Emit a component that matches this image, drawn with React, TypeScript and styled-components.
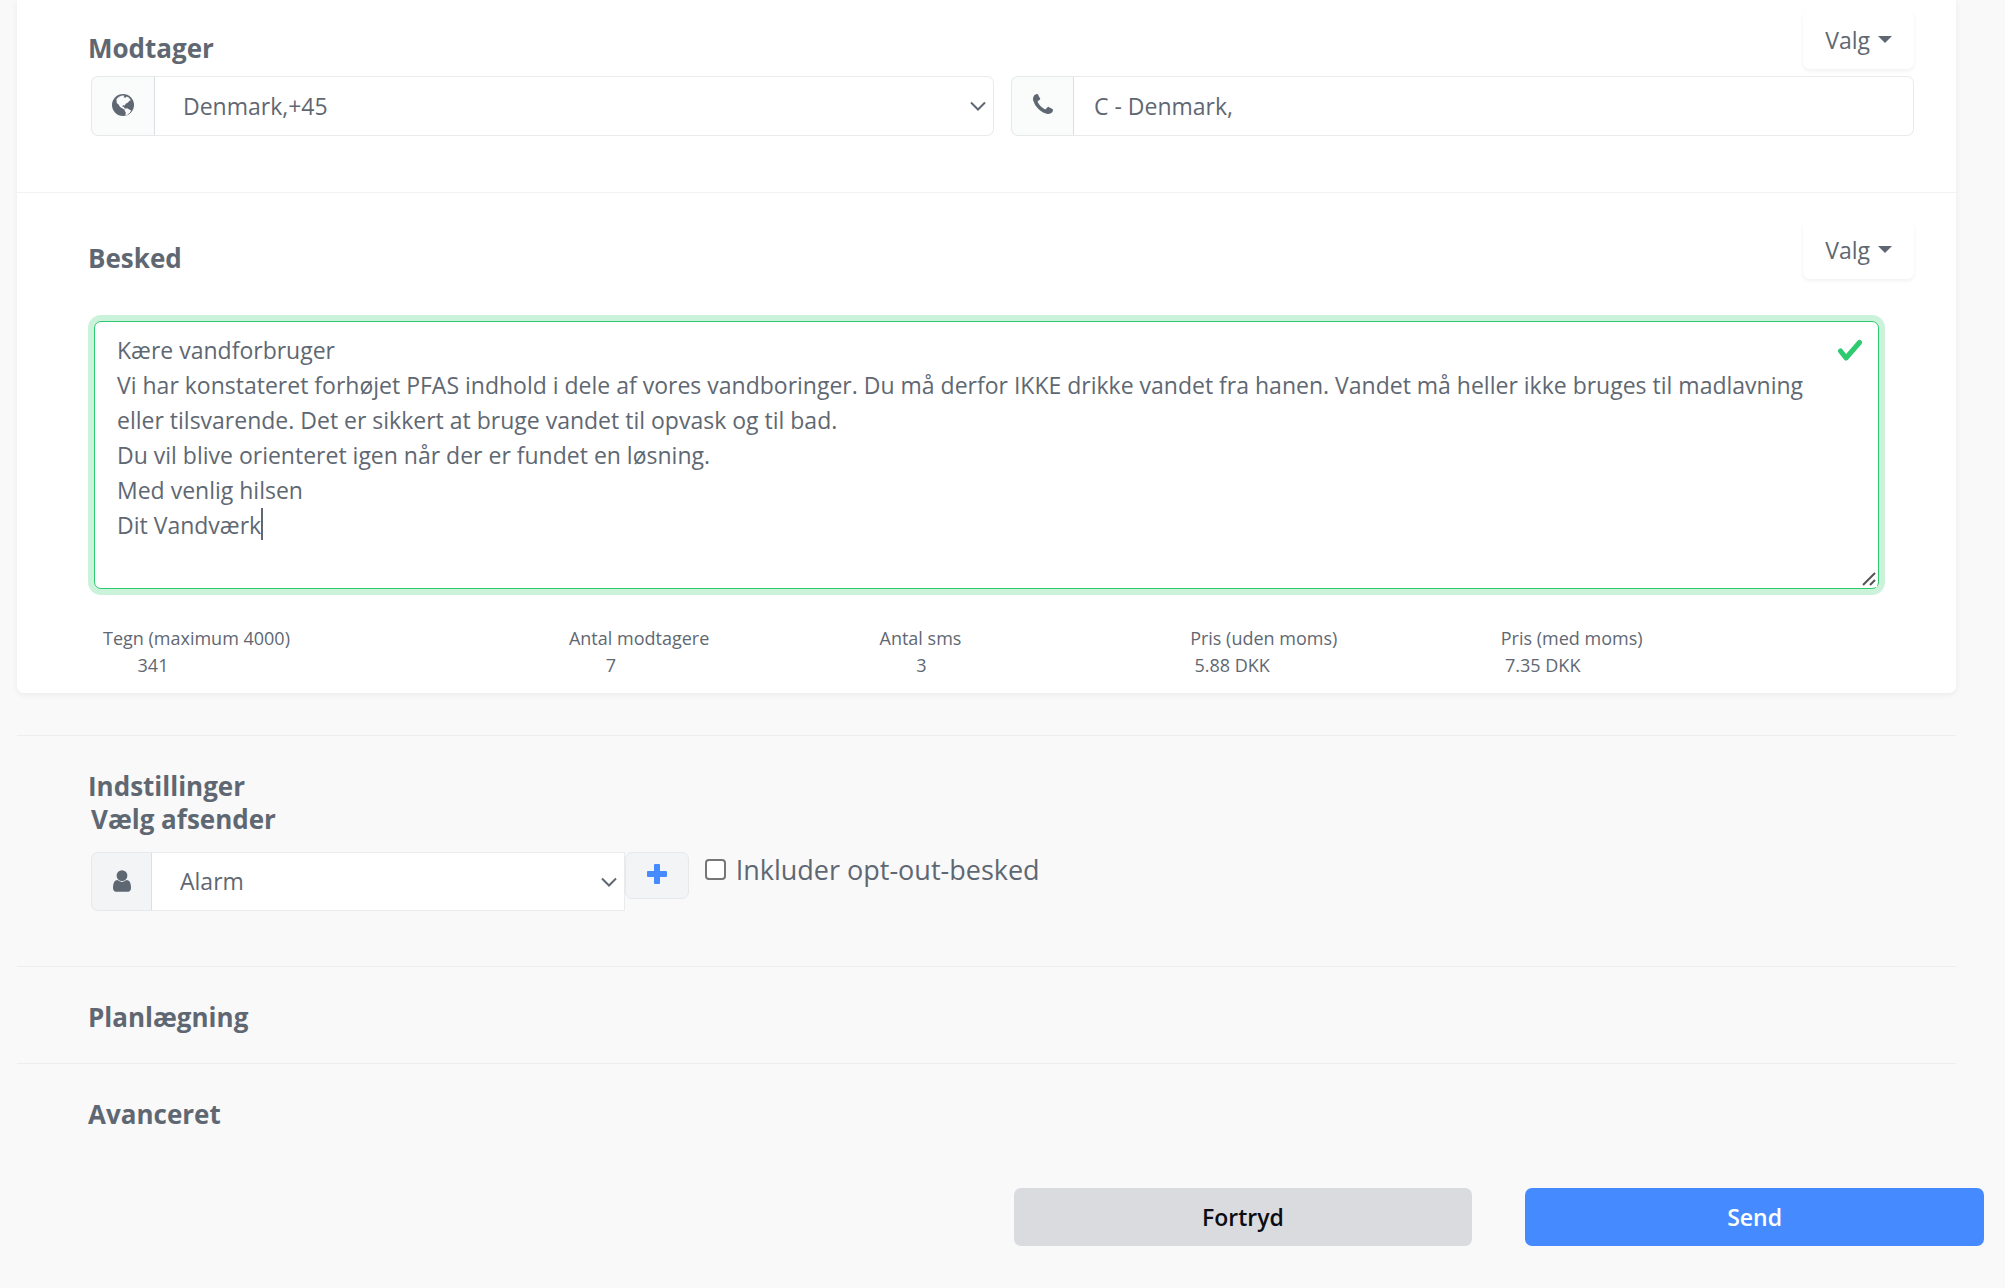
import React, { useEffect, useRef, useState } from "react";
import styled, { createGlobalStyle } from "styled-components";

const GlobalStyle = createGlobalStyle`
  *, *::before, *::after { box-sizing: border-box; }
  body {
    margin: 0;
    background: #f9f9f9;
    color: #5f6872;
    font-family: "Open Sans", "Noto Sans", sans-serif;
    font-size: 23px;
    line-height: 35px;
  }
  button, input, select, textarea { font: inherit; color: inherit; }
`;

const Page = styled.main`
  padding-bottom: 42px;
`;

const Content = styled.div`
  margin: 0 49px 0 17px;
`;

const Card = styled.div`
  background: #fff;
  border-radius: 0 0 7px 7px;
  box-shadow: 0 2px 6px rgba(0, 0, 0, 0.06);
`;

const Recipient = styled.section`
  padding: 10px 42px 56px 71px;
  border-bottom: 1px solid #f1f2f2;
`;

const Message = styled.section`
  padding: 27px 42px 14px 71px;
`;

const SectionHead = styled.div`
  display: flex;
  justify-content: space-between;
  align-items: flex-start;
`;

const Title = styled.h2<{ $inset?: boolean }>`
  margin: 0;
  padding-left: ${(p) => (p.$inset ? 3 : 0)}px;
  font-size: 26px;
  line-height: 33px;
  font-weight: 700;
`;

const HeadTitle = styled(Title)`
  padding-top: 22px;
`;

const MenuButton = styled.button`
  display: flex;
  align-items: center;
  gap: 8px;
  height: 59px;
  padding: 2px 22px 0;
  border: 0;
  border-radius: 7px;
  background: #fff;
  font-weight: 500;
  box-shadow: 0 2px 4px rgba(0, 0, 0, 0.06);
`;

const CaretDown = styled.span`
  margin-bottom: 2px;
  border: 7px solid transparent;
  border-top-color: currentColor;
  border-bottom: 0;
`;

const FieldRow = styled.div`
  display: grid;
  grid-template-columns: 1fr 1fr;
  gap: 17px;
  margin: 7px 0 0 3px;
`;

const Group = styled.div<{ $h: number }>`
  display: flex;
  height: ${(p) => p.$h}px;
`;

const Addon = styled.label<{ $w: number; $bg: string }>`
  display: flex;
  flex: none;
  justify-content: center;
  width: ${(p) => p.$w}px;
  padding-top: 17px;
  border: 1px solid #e6e9eb;
  border-right-color: #dcdfe3;
  border-radius: 7px 0 0 7px;
  background: ${(p) => p.$bg};
`;

const SelectBox = styled.div`
  position: relative;
  flex: 1;
  min-width: 0;
`;

const Select = styled.select<{ $square?: boolean }>`
  width: 100%;
  height: 100%;
  padding: 0 40px 0 28px;
  appearance: none;
  border: 1px solid #e9ebed;
  border-left: 0;
  border-radius: ${(p) => (p.$square ? "0" : "0 7px 7px 0")};
  background: #fff;
`;

const Chevron = styled.svg`
  position: absolute;
  right: 8px;
  top: 50%;
  width: 16px;
  height: 10px;
  margin-top: -5px;
  pointer-events: none;
`;

const TextInput = styled.input`
  flex: 1;
  min-width: 0;
  padding: 0 20px;
  border: 1px solid #e9ebed;
  border-left: 0;
  border-radius: 0 7px 7px 0;
  background: #fff;
`;

const MessageBox = styled.div`
  position: relative;
  margin: 42px 35px 0 6px;
`;

const TextArea = styled.textarea`
  display: block;
  width: 100%;
  height: 268px;
  padding: 11px 56px 11px 22px;
  resize: vertical;
  border: 1px solid #2eca6f;
  border-radius: 7px;
  outline: 0;
  background: #fff;
  box-shadow: 0 0 0 6px rgba(46, 202, 111, 0.25);
  caret-color: transparent;

  &::-webkit-resizer { background: transparent; }
`;

const TextCursor = styled.span`
  position: absolute;
  width: 2px;
  height: 32px;
  background: #5f6872;
  pointer-events: none;
`;

const ValidMark = styled.svg`
  position: absolute;
  top: 16px;
  right: 16px;
  width: 26px;
  height: 26px;
`;

const Grip = styled.svg`
  position: absolute;
  right: 2px;
  bottom: 2px;
  width: 16px;
  height: 16px;
  background: #fff;
  pointer-events: none;
`;

const Stats = styled.dl`
  display: grid;
  grid-template-columns: 12fr 8fr 8fr 8fr 10fr;
  margin: 36px 25px 0 15px;
  font-size: 18px;
  line-height: 27px;
`;

const Stat = styled.div`
  dt, dd { margin: 0; }
`;

const StatValue = styled.dd<{ $w: number }>`
  display: flex;
  justify-content: center;
  width: ${(p) => p.$w}px;
  white-space: nowrap;
`;

const Panel = styled.section<{ $pb: number }>`
  padding: 34px 42px ${(p) => p.$pb}px 71px;
  border-top: 1px solid #eeeeef;
`;

const Settings = styled.div`
  margin-top: 42px;
`;

const SenderRow = styled.div`
  display: flex;
  align-items: flex-start;
  margin: 16px 0 0 3px;
`;

const SenderGroup = styled(Group)`
  width: calc(29% + 5px);
`;

const AddButton = styled.button`
  display: flex;
  align-items: center;
  justify-content: center;
  width: 64px;
  height: 47px;
  padding: 0 0 4px;
  border: 1px solid #e6e8ec;
  border-radius: 7px;
  background: #f3f4f6;
  color: #458bff;
`;

const CheckLabel = styled.label`
  display: flex;
  align-items: center;
  gap: 10px;
  margin-left: 16px;
  font-size: 27px;
`;

const Checkbox = styled.input`
  width: 21px;
  height: 21px;
  margin: 0;
  appearance: none;
  border: 2px solid #767676;
  border-radius: 4px;
  background: #fff;

  &:checked { background: #458bff; }
`;

const Actions = styled.div`
  display: grid;
  grid-template-columns: 1fr 1fr;
  gap: 53px;
  margin-top: 28px;
  padding: 0 21px 0 calc(50% + 11px);
`;

const ActionButton = styled.button<{ $primary?: boolean }>`
  height: 58px;
  border: 0;
  border-radius: 7px;
  background: ${(p) => (p.$primary ? "#458bff" : "#dadbdf")};
  color: ${(p) => (p.$primary ? "#fff" : "#0b0d12")};
  font-weight: 600;
`;

const text = [
  "Kære vandforbruger",
  "Vi har konstateret forhøjet PFAS indhold i dele af vores vandboringer. Du må derfor IKKE drikke vandet fra hanen. Vandet må heller ikke bruges til madlavning eller tilsvarende. Det er sikkert at bruge vandet til opvask og til bad.",
  "Du vil blive orienteret igen når der er fundet en løsning.",
  "Med venlig hilsen",
  "Dit Vandværk",
].join("\n");

const stats = [
  { label: "Tegn (maximum 4000)", value: "341", width: 100 },
  { label: "Antal modtagere", value: "7", width: 84 },
  { label: "Antal sms", value: "3", width: 84 },
  { label: "Pris (uden moms)", value: "5.88 DKK", width: 84 },
  { label: "Pris (med moms)", value: "7.35 DKK", width: 84 },
];

const DownChevron = () => (
  <Chevron viewBox="0 0 16 10" fill="none" stroke="#5f6872" strokeWidth="2">
    <path d="M1 1.5l7 7 7-7" />
  </Chevron>
);

const Globe = () => (
  <svg width="22" height="22" viewBox="0 0 22 22">
    <circle cx="11" cy="11" r="11" fill="#5f6872" />
    <path
      fill="#fafcfb"
      d="M4.500 5L7 2.800l3-1.300 2.500.3-1 1.400 2 .6 1.200-1.300 2.300 1.200 1.800 2.600-1.600.6-1.200 1.700-2.300 1.200-1 1.700-1.900-.2-.4 1.500 1.600.3.6 1.500 1.900.8-1.300.7-2.600-1.600-2.500-1.600-1.600-2.400-1.800-1.600z"
    />
    <path fill="#fafcfb" d="M13 14.800l2.200-.5 2 1.200 2 1-1.400 2.200-2.600 2.200-1.800.5.400-3-1.200-1.800z" />
  </svg>
);

const Phone = () => (
  <svg width="20" height="20" viewBox="0 0 1408 1408">
    <path fill="#5f6872" d="M1408 1112q0 27-10 70.500t-21 68.500q-21 50-122 106-94 51-186 51-27 0-53-3.500t-57.500-12.500-47-14.500-55.500-20.500-49-18q-98-35-175-83-127-79-264-216t-216-264q-48-77-83-175-3-9-18-49t-20.500-55.500-14.500-47-12.500-57.500-3.500-53q0-92 51-186 56-101 106-122 25-11 68.500-21t70.500-10q14 0 21 3 18 6 53 76 11 19 30 54t35 63.500 31 53.500q3 4 17.500 25t21.500 35.500 7 28.500q0 20-28.500 50t-62 55-62 53-28.500 46q0 9 5 22.500t8.500 20.500 14 24 11.500 19q76 137 174 235t235 174q2 1 19 11.500t24 14 20.500 8.500 22.500 5q18 0 46-28.500t53-62 55-62 50-28.500q14 0 28.500 7t35.500 21.500 25 17.500q25 15 53.500 31t63.500 35 54 30q70 35 76 53 3 7 3 21z" />
  </svg>
);

const User = () => (
  <svg width="18" height="22" viewBox="0 0 1280 1536">
    <path fill="#5f6872" d="M1280 1271q0 109-62.500 187t-150.500 78h-854q-88 0-150.500-78t-62.500-187q0-85 8.500-160.500t31.500-152 58.500-131 94-89 134.500-34.500q131 128 313 128t313-128q76 0 134.500 34.500t94 89 58.500 131 31.500 152 8.500 160.500zm-256-887q0 159-112.500 271.500t-271.500 112.500-271.500-112.500-112.500-271.500 112.500-271.500 271.500-112.500 271.500 112.500 112.500 271.500z" />
  </svg>
);

const Plus = () => (
  <svg width="20" height="20" viewBox="0 0 20 20" fill="currentColor">
    <rect x="7" y="0" width="6" height="20" rx="1" />
    <rect x="0" y="7" width="20" height="6" rx="1" />
  </svg>
);

export default function App() {
  const area = useRef<HTMLTextAreaElement>(null);
  const [message, setMessage] = useState(text);
  const [cursorX, setCursorX] = useState(0);
  const lines = message.split("\n");

  useEffect(() => {
    const ctx = document.createElement("canvas").getContext("2d");
    if (!ctx || !area.current) return;
    ctx.font = getComputedStyle(area.current).font;
    setCursorX(23 + Math.round(ctx.measureText(lines[lines.length - 1]).width));
  }, [message]);

  return (
    <Page>
      <GlobalStyle />
      <Content>
        <Card>
          <Recipient>
            <SectionHead>
              <HeadTitle>Modtager</HeadTitle>
              <MenuButton type="button">Valg<CaretDown /></MenuButton>
            </SectionHead>
            <FieldRow>
              <Group $h={60}>
                <Addon htmlFor="country" aria-label="Land" $w={64} $bg="#fafcfb"><Globe /></Addon>
                <SelectBox>
                  <Select id="country"><option>Denmark,+45</option></Select>
                  <DownChevron />
                </SelectBox>
              </Group>
              <Group $h={60}>
                <Addon htmlFor="phone" aria-label="Telefon" $w={63} $bg="#fafcfb"><Phone /></Addon>
                <TextInput id="phone" defaultValue="C - Denmark," />
              </Group>
            </FieldRow>
          </Recipient>
          <Message>
            <SectionHead>
              <HeadTitle>Besked</HeadTitle>
              <MenuButton type="button">Valg<CaretDown /></MenuButton>
            </SectionHead>
            <MessageBox>
              <TextArea
                ref={area}
                aria-label="Besked"
                value={message}
                onChange={(e) => setMessage(e.target.value)}
              />
              <TextCursor style={{ left: cursorX, top: 12 + lines.length * 35 }} />
              <ValidMark viewBox="0 0 26 26" fill="none" stroke="#2eca6f" strokeWidth="5" strokeLinecap="round" strokeLinejoin="round">
                <path d="M3.500 14l5.500 7L22.500 5.500" />
              </ValidMark>
              <Grip viewBox="0 0 16 16" stroke="#555" strokeWidth="2">
                <path d="M2 14L14 2M9 14l5-5" />
              </Grip>
            </MessageBox>
            <Stats>
              {stats.map((s) => (
                <Stat key={s.label}>
                  <dt>{s.label}</dt>
                  <StatValue $w={s.width}>{s.value}</StatValue>
                </Stat>
              ))}
            </Stats>
          </Message>
        </Card>
        <Settings>
          <Panel $pb={55}>
            <Title>Indstillinger</Title>
            <Title as="h3" $inset>Vælg afsender</Title>
            <SenderRow>
              <SenderGroup $h={59}>
                <Addon htmlFor="sender" aria-label="Afsender" $w={61} $bg="#f3f4f6"><User /></Addon>
                <SelectBox>
                  <Select id="sender" $square><option>Alarm</option></Select>
                  <DownChevron />
                </SelectBox>
              </SenderGroup>
              <AddButton type="button" aria-label="Tilføj afsender"><Plus /></AddButton>
              <CheckLabel>
                <Checkbox type="checkbox" />
                Inkluder opt-out-besked
              </CheckLabel>
            </SenderRow>
          </Panel>
          <Panel $pb={29}><Title>Planlægning</Title></Panel>
          <Panel $pb={29}><Title>Avanceret</Title></Panel>
        </Settings>
      </Content>
      <Actions>
        <ActionButton type="button">Fortryd</ActionButton>
        <ActionButton type="button" $primary>Send</ActionButton>
      </Actions>
    </Page>
  );
}
